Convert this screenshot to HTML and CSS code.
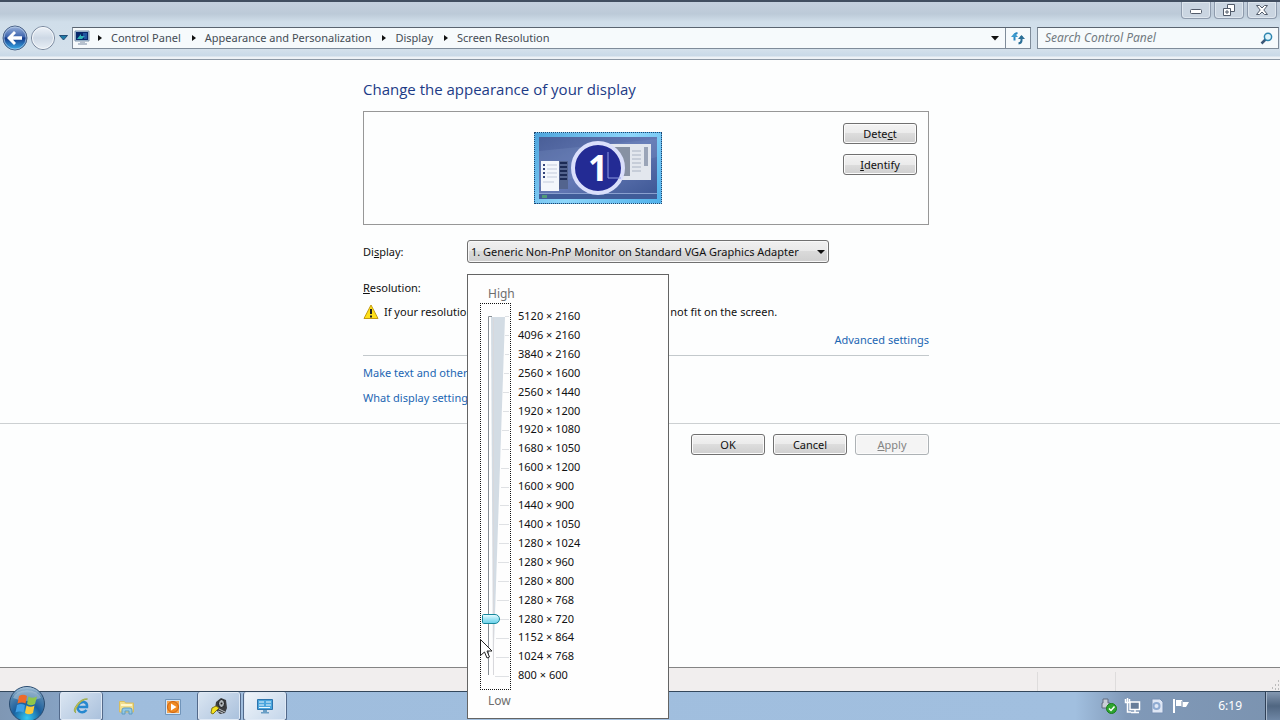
FILE: index.html
```
<!DOCTYPE html>
<html lang="en">
  <head>
    <meta charset="UTF-8" />
    <meta name="viewport" content="width=device-width, initial-scale=1.0" />
    <title>Screen Resolution</title>
    <link rel="stylesheet" href="styles.css" />
  </head>
  <body>
    <header class="titlebar">
      <div class="caption">
        <button class="caption-btn" aria-label="Minimize">
          <svg width="14" height="12" viewBox="0 0 14 12"><rect x="1.500" y="5.500" width="11" height="4" rx="1" fill="#fff" stroke="#535c6b" /></svg>
        </button>
        <button class="caption-btn" aria-label="Restore">
          <svg width="14" height="12" viewBox="0 0 14 12" fill="#fff" stroke="#535c6b">
            <path d="M5.500.5h7v7h-7z" />
            <path d="M1.500 4.500h7v7h-7z" />
            <path d="M4 7h2v2H4z" />
          </svg>
        </button>
        <button class="caption-btn" aria-label="Close">
          <svg width="14" height="12" viewBox="0 0 14 12"><path d="M1.500 1.500h3L7 4l2.500-2.500h3L8.800 6l3.700 4.500h-3L7 8l-2.500 2.500h-3L5.200 6z" fill="#fff" stroke="#535c6b" /></svg>
        </button>
      </div>
      <nav class="navbar">
        <button class="nav-btn" aria-label="Back">
          <svg width="26" height="26" viewBox="0 0 26 26">
            <defs>
              <linearGradient id="back" x1="0" y1="0" x2="0" y2="1">
                <stop offset="0" stop-color="#9cb4dc" />
                <stop offset=".45" stop-color="#3e65ae" />
                <stop offset=".5" stop-color="#14398a" />
                <stop offset="1" stop-color="#3cb2ee" />
              </linearGradient>
            </defs>
            <circle cx="13" cy="13" r="12" fill="url(#back)" stroke="#4c6488" />
            <circle cx="13" cy="13" r="11" fill="none" stroke="#c3d7ee" stroke-opacity=".6" />
            <path d="M5 13l7-7 2 2-3 3.200h9v3.600h-9l3 3.200-2 2z" fill="#fff" />
          </svg>
        </button>
        <button class="nav-btn" aria-label="Forward">
          <svg width="26" height="26" viewBox="0 0 26 26">
            <defs>
              <linearGradient id="fwd" x1="0" y1="0" x2="0" y2="1">
                <stop offset="0" stop-color="#eef3f9" />
                <stop offset=".5" stop-color="#cdd8e5" />
                <stop offset="1" stop-color="#e9eff6" />
              </linearGradient>
            </defs>
            <circle cx="13" cy="13" r="11.500" fill="url(#fwd)" stroke="#76859b" />
            <circle cx="13" cy="13" r="10.500" fill="none" stroke="#f4f7fa" />
          </svg>
        </button>
        <button class="recent-btn" aria-label="Recent pages">
          <svg width="9" height="6" viewBox="0 0 9 6"><path d="M.5.5h8L4.500 5z" fill="#1f7ca8" stroke="#234e78" /></svg>
        </button>
        <div class="address">
          <svg class="address-icon" width="17" height="16" viewBox="0 0 17 16">
            <path d="M1 1h14v10H1z" fill="#a9c3db" stroke="#8197ad" />
            <path d="M2 2h12v8H2z" fill="#08286b" />
            <path d="M3 9l4-5v2h4l-3 3z" fill="#2fb5b5" />
            <path d="M9 4h4M9 6h4M10 8h3" stroke="#3d86d6" />
            <path d="M6 11h5v2h2v2H4v-2h2z" fill="#b7c2cf" />
          </svg>
          <ol class="crumbs">
            <li><a href="#">Control Panel</a></li>
            <li><a href="#">Appearance and Personalization</a></li>
            <li><a href="#">Display</a></li>
            <li><a href="#">Screen Resolution</a></li>
          </ol>
          <button class="address-drop" aria-label="Previous locations">
            <svg width="8" height="5" viewBox="0 0 8 5"><path d="M0 0h8L4 4.500z" fill="#111" /></svg>
          </button>
          <button class="refresh" aria-label="Refresh">
            <svg width="14" height="14" viewBox="0 0 14 14" fill="none">
              <path d="M3.500 9.500V5q0-2.500 3-3" stroke="#2a86c0" stroke-width="2" />
              <path d="M0 6l3.500-4L7 6z" fill="#3b9bcf" />
              <path d="M10.500 5v4.500q0 2.500-3 3" stroke="#2b6f97" stroke-width="2" />
              <path d="M7 8l3.500-4L14 8z" fill="#2b6f97" />
            </svg>
          </button>
        </div>
        <form class="search">
          <input type="text" placeholder="Search Control Panel" aria-label="Search Control Panel" />
          <svg width="13" height="13" viewBox="0 0 13 13" fill="none">
            <path d="M6 7l-4.500 4.500" stroke="#3c5878" stroke-width="2.500" />
            <circle cx="8" cy="4.800" r="3.600" fill="#e0f4fb" stroke="#2e86b0" stroke-width="1.500" />
          </svg>
        </form>
      </nav>
    </header>

    <main class="page">
      <div class="container">
        <h1>Change the appearance of your display</h1>
        <section class="monitors">
          <div class="monitor">
            <svg viewBox="0 0 118 62" preserveAspectRatio="none">
              <defs>
                <linearGradient id="desk" x1="0" y1="0" x2="1" y2="1">
                  <stop offset="0" stop-color="#4a5f98" />
                  <stop offset=".5" stop-color="#6378b4" />
                  <stop offset="1" stop-color="#3b5593" />
                </linearGradient>
              </defs>
              <rect width="118" height="62" fill="url(#desk)" />
              <path d="M0 14L118 2v18L0 50z" fill="#8196c9" opacity=".25" />
              <rect y="57" width="118" height="5" fill="#405c99" />
              <path d="M0 56.500h118" stroke="#8aa0cf" />
              <path d="M3 58h5v3H3z" fill="#4f9a78" />
              <rect x="2" y="24" width="18" height="30" fill="#f4f7fc" />
              <path d="M4 28h2M4 32h2M4 36h2M4 40h2" stroke="#33437a" stroke-width="2" />
              <path d="M8 28h10M8 32h10M8 36h10M8 40h10M4 45h11" stroke="#c3cbdc" />
              <rect x="20" y="24" width="9" height="28" fill="#53648e" />
              <path d="M21 26h7M21 30h7M21 34h7M21 38h7M21 42h7" stroke="#1c2b55" stroke-width="2" />
              <rect x="68" y="7" width="44" height="36" fill="#e3e7ee" />
              <rect x="70" y="10" width="21" height="29" fill="#8791a3" />
              <path d="M93 14h9M93 18h9M93 22h9M93 26h9M93 30h9M93 34h9" stroke="#aab3c3" />
              <rect x="105" y="10" width="4" height="19" fill="#9ba5b8" />
              <circle cx="59" cy="31" r="25" fill="#232b94" stroke="#dadffb" stroke-width="4" />
              <path d="M69 15v26h13" fill="none" stroke="#8f9be0" />
            </svg>
            <span class="monitor-number">1</span>
          </div>
          <div class="monitor-actions">
            <button class="btn">Dete<u>c</u>t</button>
            <button class="btn"><u>I</u>dentify</button>
          </div>
        </section>

        <div class="field display">
          <label for="display">Di<u>s</u>play:</label>
          <div class="select">
            <select id="display">
              <option>1. Generic Non-PnP Monitor on Standard VGA Graphics Adapter</option>
            </select>
          </div>
        </div>

        <div class="field resolution">
          <label for="resolution"><u>R</u>esolution:</label>
          <div class="popup-anchor">
            <div class="popup">
              <span class="popup-end">High</span>
              <div class="scale">
                <div class="slider">
                  <svg width="29" height="385" viewBox="0 0 29 385">
                    <path d="M10 13h14L12 370z" fill="#d3dce4" />
                    <path d="M7.500 371V12.500H11" fill="none" stroke="#8a9096" />
                    <path d="M12.500 14v357" stroke="#d8d8dc" />
                    <path d="M24 12.500h4M24 31.500h4M24 50.500h4M23 69.500h5M22 88.500h6M22 107.500h6M21 126.500h7M21 145.500h7M20 164.500h8M20 183.500h8M19 201.500h9M18 220.500h10M18 239.500h10M17 258.500h11M17 277.500h11M16 296.500h12M16 315.500h12M15 334.500h13M15 353.500h13M14 372.500h14" stroke="#dfe1e4" />
                  </svg>
                  <input id="resolution" type="range" min="0" max="19" value="3" />
                </div>
                <ul class="modes">
                  <li>5120 × 2160</li>
                  <li>4096 × 2160</li>
                  <li>3840 × 2160</li>
                  <li>2560 × 1600</li>
                  <li>2560 × 1440</li>
                  <li>1920 × 1200</li>
                  <li>1920 × 1080</li>
                  <li>1680 × 1050</li>
                  <li>1600 × 1200</li>
                  <li>1600 × 900</li>
                  <li>1440 × 900</li>
                  <li>1400 × 1050</li>
                  <li>1280 × 1024</li>
                  <li>1280 × 960</li>
                  <li>1280 × 800</li>
                  <li>1280 × 768</li>
                  <li>1280 × 720</li>
                  <li>1152 × 864</li>
                  <li>1024 × 768</li>
                  <li>800 × 600</li>
                </ul>
              </div>
              <span class="popup-end">Low</span>
              <svg class="cursor" width="12" height="20" viewBox="0 0 12 20"><path d="M.5.5v16l4-3.500 2.500 6 2.500-1-2.500-6h5z" fill="#fff" stroke="#222" /></svg>
            </div>
          </div>
        </div>

        <p class="warning">
          <svg width="16" height="16" viewBox="0 0 16 16">
            <path d="M8 1l7 13.500H1z" fill="#ffe11a" stroke="#c39a12" stroke-linejoin="round" />
            <path d="M8 5v5M8 11.500v2" stroke="#222" stroke-width="2" />
          </svg>
          If your resolution is below 1280 × 720, some items may not fit on the screen.
        </p>
        <p class="advanced"><a href="#">Advanced settings</a></p>
        <div class="links">
          <a href="#">Make text and other items larger or smaller</a>
          <a href="#">What display settings should I choose?</a>
        </div>
      </div>
      <div class="actions">
        <div class="container actions-row">
          <button class="btn">OK</button>
          <button class="btn">Cancel</button>
          <button class="btn" disabled><u>A</u>pply</button>
        </div>
      </div>
    </main>

    <div class="statusbar">
      <span class="status-cell"></span>
      <span class="status-cell wide"></span>
      <svg width="12" height="12" viewBox="0 0 12 12" stroke="#bcbcbc" stroke-dasharray="2 2"><path d="M10.500 1v10M7.500 5v6M4.500 8v3" /></svg>
    </div>

    <footer class="taskbar">
      <button class="start" aria-label="Start">
        <svg width="38" height="38" viewBox="0 0 38 38">
          <defs>
            <radialGradient id="orb" cx=".5" cy=".9" r=".9">
              <stop offset="0" stop-color="#35c9f3" />
              <stop offset=".45" stop-color="#1a5f9e" />
              <stop offset=".8" stop-color="#5585ae" />
              <stop offset="1" stop-color="#b6cfe3" />
            </radialGradient>
          </defs>
          <circle cx="19" cy="19" r="17.500" fill="url(#orb)" stroke="#294b70" />
          <path d="M5 13a15 12 0 0 1 28 0q-14 6-28 0z" fill="#fff" opacity=".3" />
          <path d="M11 11q4-2.500 8 0l-1.500 7.500q-4-2-8 0z" fill="#ee6a29" />
          <path d="M20.500 11.500q4 2.500 8.500 0L27 19q-4 2.500-8 0z" fill="#8fc64b" />
          <path d="M9 20q4-2 8 0l-1.500 7.500q-4-2-8 0z" fill="#3f9fe6" />
          <path d="M18.500 20.500q4 2.500 8 0L25 28q-4 2.500-8 0z" fill="#fbc93c" />
        </svg>
      </button>
      <div class="tasks">
        <button class="task open" aria-label="Internet Explorer">
          <svg width="18" height="18" viewBox="0 0 18 18" fill="none">
            <path d="M14.500 13q-3 3.500-7 1.500-3-2.500-1.500-6Q8 4.500 12 5q3.500 1 3 5H6" stroke="#2688cf" stroke-width="2.500" />
            <path d="M4 16q-4-2 1-8.500T15.500 2Q9 3 5.500 9T4 16z" fill="#e9c940" stroke="#9bae53" />
          </svg>
        </button>
        <button class="task" aria-label="Windows Explorer">
          <svg width="18" height="18" viewBox="0 0 18 18">
            <path d="M1.500 3.500h5l1 1.500h8v9h-14z" fill="#f0dd8c" stroke="#d7bd61" />
            <path d="M3 7h11" stroke="#fff6c8" stroke-width="2" />
            <path d="M4 16v-4q0-2 2-2h6q2 0 2 2v4h-3v-3H7v3z" fill="#91c8e6" stroke="#5f9cc3" />
          </svg>
        </button>
        <button class="task" aria-label="Windows Media Player">
          <svg width="18" height="18" viewBox="0 0 18 18">
            <path d="M1.500 1.500h15v15h-15z" fill="#d9e8f5" stroke="#7195ba" />
            <path d="M3 3h12v12H3z" fill="#f3a552" />
            <circle cx="9" cy="9" r="5.500" fill="#f08a22" stroke="#cb6514" />
            <path d="M7 5.500L12.500 9 7 12.500z" fill="#fff" />
          </svg>
        </button>
        <button class="task open" aria-label="Magnifier">
          <svg width="18" height="18" viewBox="0 0 18 18">
            <path d="M6 5l5-4 5 2 1 8-2 5-5 1-5-5z" fill="#3b3d40" />
            <ellipse cx="11.500" cy="6.500" rx="3" ry="4" fill="#aeb4b8" stroke="#17191b" />
            <circle cx="11.500" cy="6.500" r="1" fill="#222" />
            <path d="M1 16l1-5 4-2 3 2-3 3-3 3z" fill="#f4e11f" stroke="#807617" />
            <path d="M9 12l6 3M8 14l5 2" stroke="#c3c6c8" />
          </svg>
        </button>
        <button class="task open active" aria-label="Screen Resolution">
          <svg width="18" height="18" viewBox="0 0 18 18">
            <path d="M1.500 2.500h15v10h-15z" fill="#49a5dd" stroke="#2c74ad" />
            <path d="M3 5h5M3 8h5M10 5h5M10 8h5M3 10.500h11" stroke="#e9f8ff" />
            <path d="M7 13h4v2h2v1.500H5V15h2z" fill="#699ec5" />
          </svg>
        </button>
      </div>
      <div class="tray">
        <svg width="18" height="18" viewBox="0 0 18 18">
          <path d="M3 2h5v4h2v5H2V6h1z" fill="#c9ced8" stroke="#616b7e" />
          <circle cx="11.500" cy="11.500" r="5" fill="#2ea62e" stroke="#187c1b" />
          <path d="M9 11.500l2 2 3.500-4" fill="none" stroke="#fff" stroke-width="1.500" />
        </svg>
        <svg width="18" height="18" viewBox="0 0 18 18" fill="none">
          <path d="M6 5h9.500v7.500H6z" fill="#677d99" stroke="#fff" stroke-width="1.500" />
          <path d="M7 15.500h8M11 13v2M3.500 6v9H7M1.500 2v3.500h4V2M3.500 1v5" stroke="#fff" stroke-width="1.500" />
        </svg>
        <svg width="18" height="18" viewBox="0 0 18 18">
          <path d="M4 2h8l3 3v11H4z" fill="#dfe7f5" stroke="#7890b3" />
          <circle cx="8.500" cy="9" r="3" fill="none" stroke="#8fabd2" stroke-width="2" />
        </svg>
        <svg width="18" height="18" viewBox="0 0 18 18">
          <path d="M2 2v14" stroke="#fff" stroke-width="2" />
          <path d="M4 3h6l1 2h6l-3 5h-4l-1-1H4z" fill="#fff" />
          <path d="M10 4v6" stroke="#7489a5" />
        </svg>
        <time class="clock">6:19</time>
      </div>
      <button class="show-desktop" aria-label="Show desktop"></button>
    </footer>
  </body>
</html>
```
FILE: styles.css
```
* {
  box-sizing: border-box;
}
body {
  margin: 0;
  min-height: 100vh;
  display: flex;
  flex-direction: column;
  overflow: hidden;
  background-color: #fdfefe;
  color: #111;
  font-family: "Noto Sans", "Open Sans", sans-serif;
  font-size: 11px;
  line-height: 20px;
}
button,
input,
select {
  font: inherit;
  color: inherit;
  margin: 0;
}
button {
  padding: 0;
  border: 0;
  background: none;
}
svg {
  display: block;
  flex: none;
}
a {
  color: #1c66b3;
  text-decoration: none;
}
u {
  text-underline-offset: 1px;
}

/* window frame */
.titlebar {
  height: 60px;
  border-top: 2px solid #414e60;
  border-bottom: 1px solid #8d99a6;
  background: linear-gradient(#c4d0de, #bccad8 12px, #d0deea 20px, #d3e0eb 48px, #c9d9e7 54px, #eef2f6 55px);
}
.caption {
  display: flex;
  justify-content: flex-end;
  gap: 3px;
  padding-right: 3px;
}
.caption-btn {
  width: 30px;
  height: 17px;
  display: flex;
  align-items: center;
  justify-content: center;
  border: 1px solid #8e9bad;
  border-top: 0;
  border-radius: 0 0 4px 4px;
  background-color: #cad5e1;
  box-shadow: inset 0 0 0 1px #dee6ee;
}
.navbar {
  display: flex;
  align-items: center;
  height: 38px;
  padding-left: 2px;
}
.nav-btn {
  width: 26px;
  margin-right: 2px;
}
.recent-btn {
  padding: 2px 1px;
  margin-right: 3px;
}
.address {
  flex: 1;
  display: flex;
  align-items: center;
  height: 22px;
  border: 1px solid #7f8c9a;
  border-top-color: #5a6470;
  background-color: #f6fafc;
}
.address-icon {
  margin-left: 1px;
}
.crumbs {
  flex: 1;
  display: flex;
  margin: 0;
  padding: 0;
  list-style: none;
}
.crumbs li {
  display: flex;
  align-items: center;
}
.crumbs li::before {
  content: "";
  margin: 0 9px 0 11px;
  border-left: 4px solid #111;
  border-top: 3px solid transparent;
  border-bottom: 3px solid transparent;
}
.crumbs li:first-child::before {
  margin-left: 7px;
}
.crumbs a {
  color: #444c55;
}
.address-drop {
  padding: 0 6px;
}
.refresh {
  height: 100%;
  padding: 0 5px;
  border-left: 1px solid #7f8c9a;
}
.search {
  display: flex;
  align-items: center;
  width: 242px;
  height: 22px;
  margin: 0 1px 0 6px;
  padding: 0 5px 0 7px;
  border: 1px solid #7f8c9a;
  border-top-color: #5a6470;
  background-color: #f6fafc;
}
.search input {
  flex: 1;
  min-width: 0;
  padding: 0;
  border: 0;
  outline: 0;
  background: none;
  font-size: 12px;
}
.search input::placeholder {
  color: #727a82;
  font-style: italic;
}

/* page */
.page {
  flex: 1;
  padding-left: 12px;
}
.container {
  max-width: 566px;
  margin: 0 auto;
}
h1 {
  margin: 0;
  padding: 17px 0 10px;
  color: #1c3b86;
  font-family: "Open Sans", "Noto Sans", sans-serif;
  font-size: 15px;
  font-weight: normal;
  line-height: 24px;
}
.monitors {
  display: grid;
  grid-template-columns: 1fr auto;
  height: 114px;
  padding: 11px;
  border: 1px solid #979797;
}
.monitor {
  position: relative;
  justify-self: center;
  width: 128px;
  height: 72px;
  margin: 9px 22px 0 0;
  padding: 4px;
  border: 1px dotted #20456e;
  background: linear-gradient(135deg, #4da4dc, #8ed6fa 50%, #4fb0ea);
}
.monitor svg {
  width: 100%;
  height: 100%;
}
.monitor-number {
  position: absolute;
  inset: 0;
  display: flex;
  align-items: center;
  justify-content: center;
  color: #fff;
  font-size: 35px;
  font-weight: bold;
}
.monitor-actions {
  display: flex;
  flex-direction: column;
  gap: 10px;
}
.btn {
  width: 74px;
  height: 21px;
  border: 1px solid #707070;
  border-radius: 3px;
  background: linear-gradient(#f3f3f3, #ebebeb 50%, #dddddd 50%, #cfcfcf);
  box-shadow: inset 0 0 0 1px #fbfbfb;
  line-height: 18px;
}
.btn:disabled {
  border-color: #adb2b5;
  background: #f4f4f4;
  color: #838383;
}
.field {
  display: grid;
  grid-template-columns: 104px 1fr;
  align-items: center;
}
.display {
  padding: 15px 0 11px;
}
.select {
  position: relative;
  width: 362px;
}
.select select {
  display: block;
  width: 100%;
  height: 23px;
  padding: 0 3px;
  appearance: none;
  border: 1px solid #707070;
  border-radius: 3px;
  background: linear-gradient(#f0f0f0, #e8e8e8 50%, #dadada 50%, #cfcfcf);
  box-shadow: inset 0 0 0 1px #f8f8f8;
}
.select::after {
  content: "";
  position: absolute;
  right: 4px;
  top: 10px;
  border-top: 4px solid #111;
  border-left: 4px solid transparent;
  border-right: 4px solid transparent;
  pointer-events: none;
}
.resolution {
  height: 28px;
}
.popup-anchor {
  position: relative;
  align-self: start;
}

/* drop-down with the resolution slider */
.popup {
  position: absolute;
  top: 0;
  left: 0;
  z-index: 10;
  width: 202px;
  padding: 9px 12px 8px;
  border: 1px solid #646464;
  background-color: #fefefe;
}
.popup-end {
  display: block;
  padding-left: 8px;
  color: #6d6d6d;
  font-size: 12px;
  line-height: 19px;
}
.scale {
  display: flex;
  gap: 7px;
  margin-bottom: 1px;
}
.slider {
  display: grid;
  border: 1px dotted #111;
}
.slider svg,
.slider input {
  grid-area: 1 / 1;
}
.slider input {
  width: 20px;
  height: 371px;
  margin: 6px 0 0;
  appearance: none;
  background: none;
  writing-mode: vertical-lr;
  direction: rtl;
}
.slider input::-webkit-slider-thumb {
  appearance: none;
  width: 18px;
  height: 10px;
  border: 1px solid #16889c;
  border-radius: 2px 6px 6px 2px;
  background: linear-gradient(#e4fbff, #9fe5f5 50%, #6fd2ea);
}
.modes {
  display: flex;
  flex-direction: column;
  margin: 0;
  padding: 4px 0 5px;
  list-style: none;
}
.modes li {
  flex: 1;
  line-height: 18px;
}
.cursor {
  position: absolute;
  top: 364px;
  left: 12px;
}
.warning {
  display: flex;
  align-items: center;
  gap: 5px;
  margin: 0;
}
.advanced {
  margin: 0;
  padding: 8px 0 5px;
  border-bottom: 1px solid #c3c9cc;
  text-align: right;
}
.links {
  display: flex;
  flex-direction: column;
  align-items: flex-start;
  gap: 5px;
  padding: 7px 0 15px;
}
.actions {
  margin-left: -12px;
  padding: 10px 0 0 12px;
  border-top: 1px solid #ccd0d2;
}
.actions-row {
  display: flex;
  justify-content: flex-end;
  gap: 8px;
}

.statusbar {
  display: flex;
  justify-content: flex-end;
  align-items: flex-end;
  height: 24px;
  border-top: 1px solid #848484;
  background-color: #f1eeee;
}
.status-cell {
  width: 78px;
  height: 19px;
  border-left: 1px solid #dedcdc;
}
.status-cell.wide {
  width: 153px;
}

/* taskbar */
.taskbar {
  display: flex;
  height: 29px;
  border-top: 1px solid #33475c;
  background: linear-gradient(90deg, #7f97b4, #86a2c3 60px, #9fbddd 110px, #a1bfdf 84%, #8099b8 88%, #7b93b0);
}
.start {
  position: relative;
  width: 59px;
}
.start svg {
  position: absolute;
  left: 8px;
  top: -7px;
}
.tasks {
  flex: 1;
  display: flex;
  gap: 2px;
}
.task {
  width: 44px;
  height: 29px;
  display: flex;
  align-items: center;
  justify-content: center;
}
.task.open {
  border: 1px solid #52698a;
  border-top: 0;
  border-radius: 3px;
  background: linear-gradient(135deg, #dbe6f2, #a9c0dc);
  box-shadow: inset 0 0 0 1px #dfe9f5;
}
.task.active {
  background: linear-gradient(135deg, #f0f5fa, #c3d5ea);
}
.tray {
  display: flex;
  align-items: center;
  gap: 6px;
  color: #fff;
}
.clock {
  margin: 0 23px 0 22px;
  font-size: 12px;
}
.show-desktop {
  width: 15px;
  border-left: 1px solid #2f4057;
  background: linear-gradient(#8498b1, #506681 50%, #6f87a5);
  box-shadow: inset 1px 0 0 #a9b9cc;
}
```
